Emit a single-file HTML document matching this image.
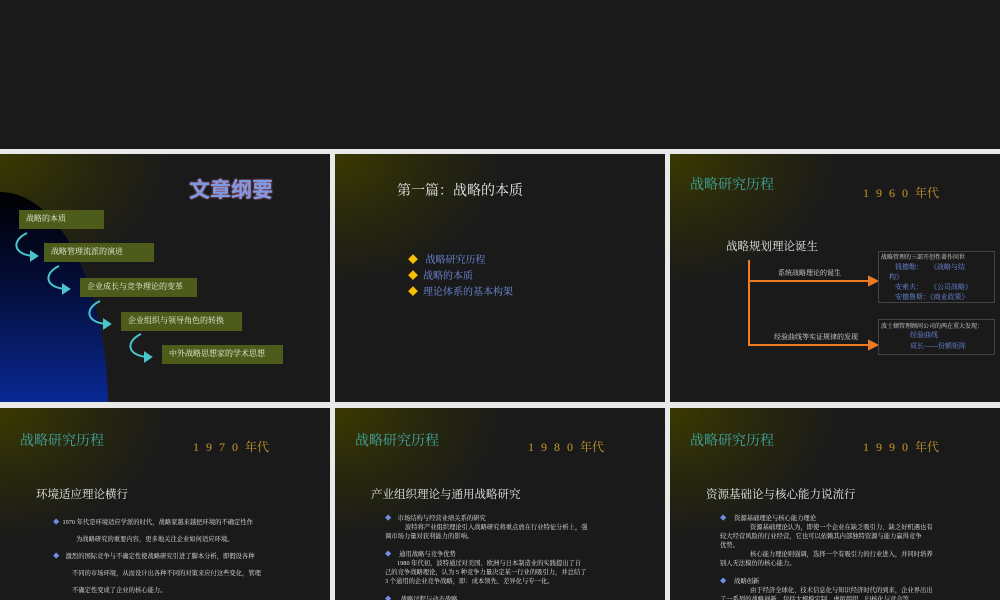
<!DOCTYPE html>
<html><head><meta charset="utf-8"><style>
*{margin:0;padding:0;box-sizing:border-box}
body{width:1000px;height:600px;background:#e9e9e9;position:relative;overflow:hidden;font-family:"Liberation Serif","Noto Serif CJK SC","Noto Sans CJK SC",serif;}
.top{position:absolute;left:0;top:0;width:1000px;height:149px;background:#1a1a1a}
.s{position:absolute;overflow:hidden;background:radial-gradient(ellipse 170px 130px at 0 0,#3b3900 0%,#2a2a0c 45%,#1a1a1a 100%)}
.a{position:absolute;white-space:nowrap}
.t{color:#3fa6a0;font-size:14px}
.d{color:#c99a2a;font-size:12px}
.d span{letter-spacing:7px}
.sub{color:#e6e6e6;font-size:11.5px}
.sm{color:#e0e0e0;font-size:6.3px;line-height:9px}
.bl{color:#6f8fe6;font-size:7px}
.box{position:absolute;background:#4d5b1b;color:#f0f0e0;font-size:8px;line-height:18px;padding-left:7px}
</style></head><body>
<div class="top"></div>

<!-- slide 1 -->
<div class="s" style="left:0;top:154px;width:330px;height:248px">
  <div style="position:absolute;left:-108px;top:38px;width:216px;height:430px;border-radius:50%;background:linear-gradient(#000 0%,#040c34 20%,#0a2ea8 55%,#0b3ae0 100%)"></div>
  <div class="a" style="left:189px;top:20px;font-size:21px;font-weight:bold;color:#7b9ae2;text-shadow:0 0 1px #d07090,0 0 2px #a06080;font-family:'Noto Sans CJK SC',sans-serif">文章纲要</div>
  <div class="box" style="left:19px;top:56px;width:85px;height:19px">战略的本质</div>
  <div class="box" style="left:44px;top:89px;width:110px;height:19px">战略管理流派的演进</div>
  <div class="box" style="left:80px;top:124px;width:117px;height:19px">企业成长与竞争理论的变革</div>
  <div class="box" style="left:121px;top:158px;width:121px;height:19px">企业组织与领导角色的转换</div>
  <div class="box" style="left:162px;top:191px;width:121px;height:19px">中外战略思想家的学术思想</div>
  <svg width="330" height="248" style="position:absolute;left:0;top:0" fill="none" stroke="#48c6cc" stroke-width="2">
    <g><path d="M27 79 C12 86 12 100 33 102"/><path d="M31 98 L37 102 L31 106Z" fill="#48c6cc"/></g>
    <g transform="translate(32,33)"><path d="M27 79 C12 86 12 100 33 102"/><path d="M31 98 L37 102 L31 106Z" fill="#48c6cc"/></g>
    <g transform="translate(73,68)"><path d="M27 79 C12 86 12 100 33 102"/><path d="M31 98 L37 102 L31 106Z" fill="#48c6cc"/></g>
    <g transform="translate(114,101)"><path d="M27 79 C12 86 12 100 33 102"/><path d="M31 98 L37 102 L31 106Z" fill="#48c6cc"/></g>
  </svg>
</div>

<!-- slide 2 -->
<div class="s" style="left:335px;top:154px;width:330px;height:248px">
  <div class="a" style="left:62px;top:26px;font-size:14px;color:#e8e8e8">第一篇：战略的本质</div>
  <div class="a" style="left:73px;top:99px;font-size:10px;line-height:16px;color:#6f8fe0">
    <div><span style="color:#f4c000">◆</span>&nbsp;&nbsp;&nbsp;战略研究历程</div>
    <div><span style="color:#f4c000">◆</span>&nbsp;&nbsp;战略的本质</div>
    <div><span style="color:#f4c000">◆</span>&nbsp;&nbsp;理论体系的基本构架</div>
  </div>
</div>

<!-- slide 3 -->
<div class="s" style="left:670px;top:154px;width:330px;height:248px">
  <div class="a t" style="left:20px;top:20px">战略研究历程</div>
  <div class="a d" style="left:193px;top:30px"><span>1960</span>年代</div>
  <div class="a sub" style="left:56px;top:84px">战略规划理论诞生</div>
  <svg width="330" height="248" style="position:absolute;left:0;top:0" fill="none" stroke="#f07a20" stroke-width="2">
    <path d="M79 106 V191 H200"/><path d="M79 127 H200"/>
    <path d="M199 123 L207 127 L199 131Z M199 187 L207 191 L199 195Z" fill="#f07a20"/>
    <rect x="208.5" y="97.5" width="116" height="51" stroke="#444" stroke-width="1"/>
    <rect x="208.5" y="165.5" width="116" height="35" stroke="#444" stroke-width="1"/>
  </svg>
  <div class="a" style="left:108px;top:114px;font-size:7px;color:#ddd">系统战略理论的诞生</div>
  <div class="a" style="left:104px;top:178px;font-size:7px;color:#ddd">经验曲线等实证规律的发现</div>
  <div class="a" style="left:211px;top:98px;font-size:6px;color:#ddd">战略管理的三部开创性著作问世</div>
  <div class="a bl" style="left:225px;top:108px;line-height:10px">钱德勒：&nbsp;&nbsp;&nbsp;&nbsp;《战略与结<br><span style="margin-left:-6px">构》</span><br>安索夫：&nbsp;&nbsp;&nbsp;&nbsp;《公司战略》<br>安德鲁斯：《商业政策》</div>
  <div class="a" style="left:211px;top:167px;font-size:6px;color:#ddd">波士顿管理顾问公司的两在重大发现：</div>
  <div class="a bl" style="left:240px;top:176px;line-height:11px">经验曲线<br>成长——份额矩阵</div>
</div>

<!-- slide 4 -->
<div class="s" style="left:0;top:408px;width:330px;height:192px">
  <div class="a t" style="left:20px;top:22px">战略研究历程</div>
  <div class="a d" style="left:193px;top:30px"><span>1970</span>年代</div>
  <div class="a sub" style="left:36px;top:78px">环境适应理论横行</div>
  <div class="a sm" style="left:53px;top:106px;line-height:17px">
    <div><span style="color:#6f8fe6">◆</span>&nbsp;&nbsp;1970 年代是环境适应学派的时代，战略家越来越把环境的不确定性作</div>
    <div style="padding-left:23px">为战略研究的重要内容，更多地关注企业如何适应环境。</div>
    <div><span style="color:#6f8fe6">◆</span>&nbsp;&nbsp;&nbsp;&nbsp;激烈的国际竞争与不确定性使战略研究引进了脚本分析，即假设各种</div>
    <div style="padding-left:19px">不同的市场环境，从而设计出各种不同的对策来应付这些变化，管理</div>
    <div style="padding-left:19px">不确定性变成了企业的核心能力。</div>
  </div>
</div>

<!-- slide 5 -->
<div class="s" style="left:335px;top:408px;width:330px;height:192px">
  <div class="a t" style="left:20px;top:22px">战略研究历程</div>
  <div class="a d" style="left:193px;top:30px"><span>1980</span>年代</div>
  <div class="a sub" style="left:36px;top:78px">产业组织理论与通用战略研究</div>
  <div class="a sm" style="left:50px;top:106px">
    <div><span style="color:#6f8fe6">◆</span>&nbsp;&nbsp;&nbsp;&nbsp;市场结构与经营业绩关系的研究</div>
    <div style="padding-left:20px">波特将产业组织理论引入战略研究将重点放在行业特征分析上，强</div>
    <div>调市场力量对获利能力的影响。</div>
    <div style="height:9px"></div>
    <div><span style="color:#6f8fe6">◆</span>&nbsp;&nbsp;&nbsp;&nbsp;&nbsp;通用战略与竞争优势</div>
    <div style="padding-left:12px">1980 年代初，波特通过对美国、欧洲与日本制造业的实践提出了自</div>
    <div>己的竞争战略理论，认为 5 种竞争力量决定某一行业的吸引力，并总结了</div>
    <div>3 个通用的企业竞争战略，即：成本领先、差异化与专一化。</div>
    <div style="height:9px"></div>
    <div><span style="color:#6f8fe6">◆</span>&nbsp;&nbsp;&nbsp;&nbsp;&nbsp;&nbsp;战略过程与动态战略</div>
  </div>
</div>

<!-- slide 6 -->
<div class="s" style="left:670px;top:408px;width:330px;height:192px">
  <div class="a t" style="left:20px;top:22px">战略研究历程</div>
  <div class="a d" style="left:193px;top:30px"><span>1990</span>年代</div>
  <div class="a sub" style="left:36px;top:78px">资源基础论与核心能力说流行</div>
  <div class="a sm" style="left:50px;top:106px">
    <div><span style="color:#6f8fe6">◆</span>&nbsp;&nbsp;&nbsp;&nbsp;&nbsp;资源基础理论与核心能力理论</div>
    <div style="padding-left:30px">资源基础理论认为，即使一个企业在缺乏吸引力、缺乏好机遇也有</div>
    <div>较大经营风险的行业经营，它也可以依赖其内部独特资源与能力赢得竞争</div>
    <div>优势。</div>
    <div style="padding-left:30px">核心能力理论则强调，选择一个有吸引力的行业进入，并同时培养</div>
    <div>别人无法模仿的核心能力。</div>
    <div style="height:9px"></div>
    <div><span style="color:#6f8fe6">◆</span>&nbsp;&nbsp;&nbsp;&nbsp;&nbsp;战略创新</div>
    <div style="padding-left:30px">由于经济全球化、技术信息化与知识经济时代的到来，企业界出出</div>
    <div>了一系列的战略创新，包括大规模定制、虚拟组织、归核化与竞合等。</div>
  </div>
</div>
</body></html>
